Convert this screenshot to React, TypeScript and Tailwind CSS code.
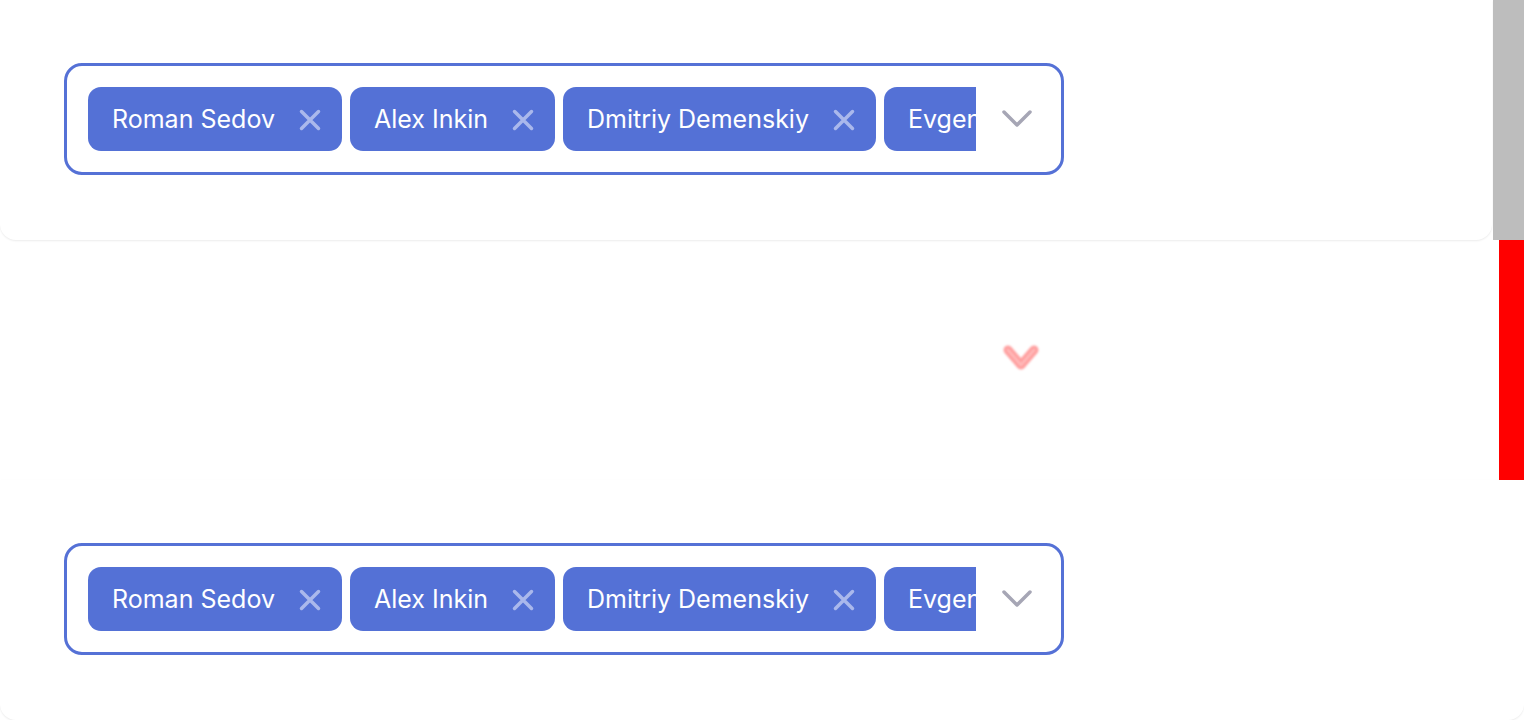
const names = ["Roman Sedov", "Alex Inkin", "Dmitriy Demenskiy", "Evgeniy Mamaev"]

function Chip({ label }: { label: string }) {
  return (
    <div className="flex h-16 shrink-0 items-center gap-[24px] rounded-[13px] bg-[#5471d6] pl-6 pr-[21px] pt-px text-[25px] text-white">
      <span className="whitespace-nowrap">{label}</span>
      <svg width="22" height="22" viewBox="0 0 22 22" className="shrink-0">
        <path d="M2.5 2.5 L19.5 19.5 M19.5 2.5 L2.5 19.5" stroke="#aab8ec" strokeWidth="3.5" strokeLinecap="round" />
      </svg>
    </div>
  )
}

function MultiSelect() {
  return (
    <div className="flex h-[112px] w-[1000px] items-center rounded-[18px] border-[3px] border-[#5571d6] bg-white pl-[21px]">
      <div className="flex w-[888px] gap-2 overflow-hidden">
        {names.map((n) => (
          <Chip key={n} label={n} />
        ))}
      </div>
      <div className="flex flex-1 justify-center pr-[4px]">
        <svg width="30" height="18" viewBox="0 0 30 18">
          <path d="M2 2 L15 15 L28 2" fill="none" stroke="#a6a6b5" strokeWidth="3.5" strokeLinecap="round" strokeLinejoin="round" />
        </svg>
      </div>
    </div>
  )
}

export default function App() {
  return (
    <div className="h-[720px] w-[1524px] overflow-hidden bg-white font-['Inter',sans-serif]">
      <div className="flex h-[240px]">
        <div className="flex-1 rounded-b-2xl bg-white pl-16 pt-[63px] shadow-[0_1px_2px_rgba(0,0,0,0.08)]">
          <MultiSelect />
        </div>
        <div className="ml-px w-[31px] bg-[#bdbdbd]" />
      </div>
      <div className="flex h-[240px]">
        <div className="flex-1 pl-[1001px] pt-[102px]">
          <svg width="40" height="36" viewBox="0 0 40 36" className="blur-[0.8px]">
            <path d="M7 8 L20 23 L33 8" fill="none" stroke="#ff2a2a" strokeOpacity="0.45" strokeWidth="9" strokeLinecap="round" strokeLinejoin="round" />
            <path d="M7 8 L20 23 L33 8" fill="none" stroke="#ffffff" strokeOpacity="0.3" strokeWidth="2.5" strokeLinecap="round" strokeLinejoin="round" />
          </svg>
        </div>
        <div className="w-[25px] bg-[#ff0000]" />
      </div>
      <div className="h-[240px] rounded-b-2xl bg-white pl-16 pt-[63px] shadow-[0_1px_2px_rgba(0,0,0,0.08)]">
        <MultiSelect />
      </div>
    </div>
  )
}
